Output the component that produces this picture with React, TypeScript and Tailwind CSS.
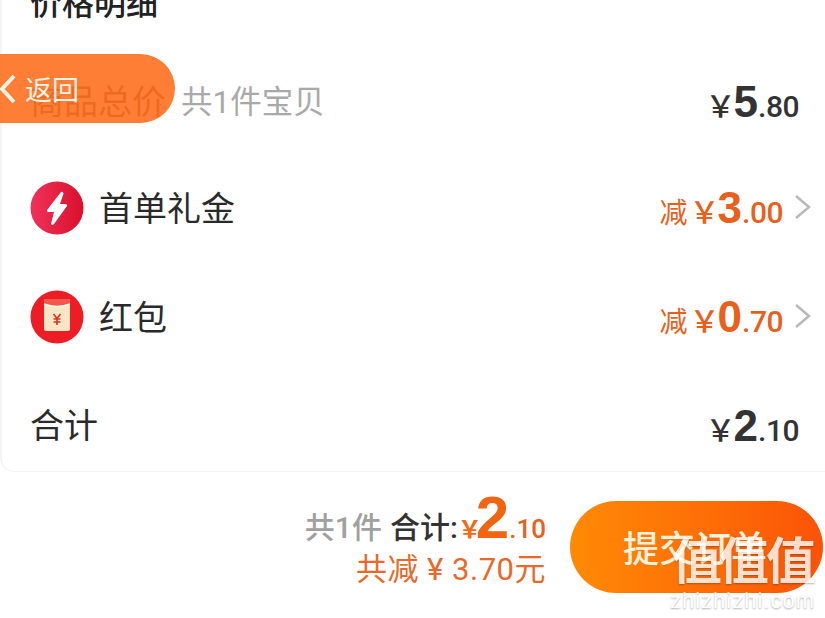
const font = "font-['Roboto','Noto_Sans_CJK_SC',sans-serif]";

function Price({ big, small, prefix, color }: { big: string; small: string; prefix?: string; color: string }) {
  return (
    <div className={`flex items-baseline ${color}`}>
      {prefix && <span className="text-[28px] leading-none mr-[2px]">{prefix}</span>}
      <span className="text-[30px] leading-none font-medium">￥</span>
      <span className="text-[44px] leading-none font-bold ml-[-2px] font-['Liberation_Sans',sans-serif]">{big}</span>
      <span className="text-[30px] leading-none font-medium tracking-[-0.5px]">.{small}</span>
    </div>
  );
}

function FlashIcon() {
  return (
    <svg width="54" height="54" viewBox="0 0 54 54">
      <defs>
        <linearGradient id="flash" x1="0" y1="0" x2="1" y2="0">
          <stop offset="0" stopColor="#f0325a" />
          <stop offset="1" stopColor="#d9102c" />
        </linearGradient>
      </defs>
      <circle cx="27" cy="27" r="26.5" fill="url(#flash)" />
      <path d="M31 11 L17 29 Q16.5 31 19 31 L24 31 L21 43 Q22 45 24 43 L37 25 Q37.5 23 35 23 L30 23 L33.5 12.5 Q33 10 31 11 Z" fill="#fff" />
    </svg>
  );
}

function PacketIcon() {
  return (
    <svg width="54" height="54" viewBox="0 0 54 54">
      <circle cx="27" cy="27" r="26.5" fill="#ee1c25" />
      <rect x="14" y="9" width="26" height="32" rx="2" fill="#fbe6c4" />
      <path d="M14 11 Q14 9 16 9 L38 9 Q40 9 40 11 L40 14 Q27 19 14 14 Z" fill="#f4574f" />
      <path d="M14 14 Q27 19 40 14" fill="none" stroke="#fff6e4" strokeWidth="1.5" />
      <path d="M23.5 24 L27 28.5 L30.5 24 M27 28.5 L27 35 M23.5 29 L30.5 29 M23.5 32 L30.5 32" fill="none" stroke="#d8322c" strokeWidth="1.6" />
    </svg>
  );
}

function Row({ children, right, className }: { children: React.ReactNode; right: React.ReactNode; className: string }) {
  return (
    <div className={`flex shrink-0 items-center justify-between ${className}`}>
      <div className="flex items-center">{children}</div>
      {right}
    </div>
  );
}

function Discount({ big, small }: { big: string; small: string }) {
  return (
    <div className="flex items-center -mr-[13px]">
      <Price big={big} small={small} prefix="减" color="text-[#e8601c]" />
      <svg width="18" height="26" viewBox="0 0 18 26" className="ml-[11px] mb-[2px]">
        <path d="M2 2 L15 13 L2 24" fill="none" stroke="#b8b8b8" strokeWidth="2.4" />
      </svg>
    </div>
  );
}

export default function App() {
  return (
    <div className={`relative w-[825px] h-[618px] overflow-hidden bg-white ${font}`}>
      {/* Price detail card */}
      <div className="h-[472px] bg-white rounded-bl-[14px] border-l-[2px] border-b border-[#f4f4f4] pl-[28px] pr-[26px] pt-[47px] flex flex-col">
        <div className="text-[32px] leading-[46px] font-medium text-[#222] -mt-[66px] h-[46px] shrink-0">价格明细</div>
        <Row className="h-[60px] mt-[45px]" right={<Price big="5" small="80" color="text-[#333]" />}>
          <span className="text-[34px] text-[#333] mt-[1px]">商品总价</span>
          <span className="text-[31.5px] text-[#a9a9a9] ml-[15px] mt-[1px]">共1件宝贝</span>
        </Row>
        <Row className="h-[60px] mt-[46px]" right={<Discount big="3" small="00" />}>
          <FlashIcon />
          <span className="text-[34px] text-[#2a2a2a] ml-[15px] mt-[3px]">首单礼金</span>
        </Row>
        <Row className="h-[60px] mt-[49px]" right={<Discount big="0" small="70" />}>
          <PacketIcon />
          <span className="text-[34px] text-[#2a2a2a] ml-[15px] mt-[3px]">红包</span>
        </Row>
        <Row className="h-[60px] mt-[49px]" right={<Price big="2" small="10" color="text-[#333]" />}>
          <span className="text-[34px] text-[#2a2a2a]">合计</span>
        </Row>
      </div>

      {/* Bottom bar */}
      <div className="flex justify-end items-start pt-[16px] pr-[2px]">
        <div className="flex flex-col items-end mr-[24px]">
          <div className="flex items-baseline h-[62px]">
            <span className="text-[30px] font-medium text-[#a0a0a0] mr-[8px]">共1件</span>
            <span className="text-[30px] font-medium text-[#333]">合计:</span>
            <span className="text-[24px] font-bold text-[#f26a12] -mr-[6px]">￥</span>
            <span className="text-[60px] leading-none font-bold text-[#f2640f] font-['Liberation_Sans',sans-serif]">2</span>
            <span className="text-[26px] font-medium text-[#e8601c]">.10</span>
          </div>
          <div className="text-[31px] leading-[40px] tracking-[0.5px] text-[#e8692a]">共减 ¥ 3.70元</div>
        </div>
        <div className="w-[253px] h-[92px] mt-[13px] rounded-full bg-gradient-to-r from-[#ff8a05] to-[#fb5207] flex items-center pl-[53px] pt-[5px] text-[36px] font-medium text-[#fff1dc]">
          提交订单
        </div>
      </div>

      {/* Floating back pill */}
      <div className="absolute left-0 top-[54px] w-[175px] h-[69px] rounded-r-full bg-[#ff7020]/90 flex items-center">
        <svg width="18" height="30" viewBox="0 0 18 30" className="ml-[-1px]">
          <path d="M15 2 L3 15 L15 28" fill="none" stroke="#fff3e6" strokeWidth="4" />
        </svg>
        <span className="text-[27px] text-[#fff3e6] ml-[8px] mt-[5px]">返回</span>
      </div>

      {/* Watermark */}
      <div className="absolute right-[10px] top-[537px] flex flex-col items-center text-white [text-shadow:0_1px_2px_rgba(0,0,0,0.35)]">
        <div className="text-[50px] leading-[50px] font-bold tracking-[-3px] opacity-80">值值值</div>
        <div className="text-[22px] leading-[28px] tracking-[1px] opacity-90 font-['Liberation_Sans',sans-serif]">zhizhizhi.com</div>
      </div>
    </div>
  );
}
